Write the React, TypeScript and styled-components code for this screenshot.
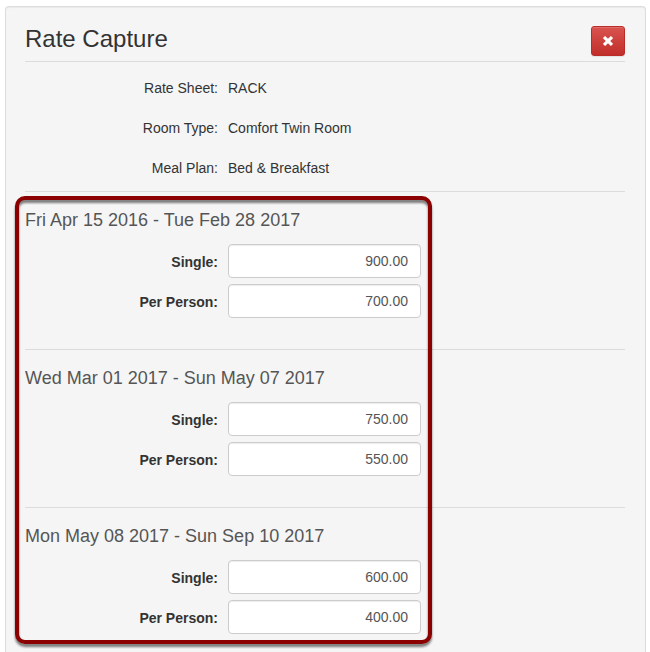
import React, { useId } from "react";
import styled, { createGlobalStyle } from "styled-components";

const GlobalStyle = createGlobalStyle`
  *, *::before, *::after {
    box-sizing: border-box;
  }

  body {
    margin: 0;
    background: #fff;
    color: #333;
    font-family: "Liberation Sans", Arial, sans-serif;
    font-size: 14px;
    line-height: 20px;
  }
`;

const Panel = styled.main`
  min-height: calc(100vh - 6px);
  margin: 6px 4px 0 5px;
  padding: 19px 20px 18px 19px;
  border: 1px solid #dcdcdc;
  border-bottom: 0;
  border-radius: 4px 4px 0 0;
  background: #f5f5f5;
  box-shadow: inset 0 1px 1px rgba(0, 0, 0, 0.05);
`;

const Header = styled.header`
  display: flex;
  align-items: flex-start;
  justify-content: space-between;
  padding-bottom: 5px;
  border-bottom: 1px solid #dcdcdc;
`;

const Title = styled.h1`
  margin: 0;
  font-size: 24px;
  font-weight: 400;
  line-height: 26px;
`;

const CloseButton = styled.button`
  display: flex;
  align-items: center;
  justify-content: center;
  width: 34px;
  height: 30px;
  padding: 0;
  border: 1px solid #b92c28;
  border-radius: 3px;
  background: linear-gradient(#d9534f, #c12e2a);
  box-shadow: inset 0 1px 0 rgba(255, 255, 255, 0.15),
    0 1px 1px rgba(0, 0, 0, 0.08);
  cursor: pointer;
`;

const Details = styled.dl`
  margin: 0;
  padding: 6px 0 3px;
`;

const rowColumns = `
  display: grid;
  grid-template-columns: repeat(3, minmax(0, 1fr));
  column-gap: 10px;
  align-items: center;
  padding-right: 1px;
`;

const DetailRow = styled.div`
  ${rowColumns}
  height: 40px;
`;

const Term = styled.dt`
  text-align: right;
`;

const Value = styled.dd`
  margin: 0;
  white-space: nowrap;
`;

const Periods = styled.div`
  position: relative;
`;

const Highlight = styled.div`
  position: absolute;
  top: 5px;
  bottom: -10px;
  left: -10px;
  width: calc(66.66% + 17px);
  border: 4px solid #8b0000;
  border-radius: 10px;
  filter: drop-shadow(0 3px 1px rgba(0, 0, 0, 0.5));
  pointer-events: none;
`;

const PeriodSection = styled.section`
  padding: 18px 0 31px;
  border-top: 1px solid #dcdcdc;

  &:last-of-type {
    padding-bottom: 0;
  }
`;

const PeriodTitle = styled.h2`
  margin: 0 0 14px;
  color: #555;
  font-size: 18px;
  font-weight: 400;
  line-height: 20px;
`;

const Fields = styled.div`
  display: grid;
  row-gap: 6px;
`;

const FieldRow = styled.div`
  ${rowColumns}
`;

const Label = styled.label`
  padding-top: 2px;
  font-weight: 700;
  text-align: right;
`;

const RateInput = styled.input`
  width: 100%;
  height: 34px;
  padding: 6px 12px;
  border: 1px solid #ccc;
  border-radius: 4px;
  background: #fff;
  box-shadow: inset 0 1px 1px rgba(0, 0, 0, 0.075);
  color: #555;
  font: inherit;
  text-align: right;
`;

const details = [
  { term: "Rate Sheet:", value: "RACK" },
  { term: "Room Type:", value: "Comfort Twin Room" },
  { term: "Meal Plan:", value: "Bed & Breakfast" },
];

const periods = [
  { range: "Fri Apr 15 2016 - Tue Feb 28 2017", single: "900.00", perPerson: "700.00" },
  { range: "Wed Mar 01 2017 - Sun May 07 2017", single: "750.00", perPerson: "550.00" },
  { range: "Mon May 08 2017 - Sun Sep 10 2017", single: "600.00", perPerson: "400.00" },
];

function RateField({ label, value }: { label: string; value: string }) {
  const id = useId();
  return (
    <FieldRow>
      <Label htmlFor={id}>{label}</Label>
      <RateInput id={id} type="text" inputMode="decimal" defaultValue={value} />
    </FieldRow>
  );
}

function RemoveIcon() {
  return (
    <svg width="10" height="10" viewBox="0 0 10 10" fill="#fff" aria-hidden="true">
      <path d="M2.4.2 5 2.8 7.6.2Q7.9 0 8.2.2L9.8 1.8Q10 2.1 9.8 2.4L7.2 5 9.8 7.6Q10 7.9 9.8 8.2L8.2 9.8Q7.9 10 7.6 9.8L5 7.2 2.4 9.8Q2.1 10 1.8 9.8L.2 8.2Q0 7.9.2 7.6L2.8 5 .2 2.4Q0 2.1.2 1.8L1.8.2Q2.1 0 2.4.2Z" />
    </svg>
  );
}

export default function App() {
  return (
    <>
      <GlobalStyle />
      <Panel>
        <Header>
          <Title>Rate Capture</Title>
          <CloseButton type="button" aria-label="Close">
            <RemoveIcon />
          </CloseButton>
        </Header>
        <Details>
          {details.map(({ term, value }) => (
            <DetailRow key={term}>
              <Term>{term}</Term>
              <Value>{value}</Value>
            </DetailRow>
          ))}
        </Details>
        <Periods>
          {periods.map(({ range, single, perPerson }) => (
            <PeriodSection key={range}>
              <PeriodTitle>{range}</PeriodTitle>
              <Fields>
                <RateField label="Single:" value={single} />
                <RateField label="Per Person:" value={perPerson} />
              </Fields>
            </PeriodSection>
          ))}
          <Highlight />
        </Periods>
      </Panel>
    </>
  );
}
